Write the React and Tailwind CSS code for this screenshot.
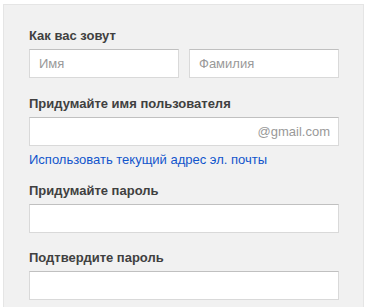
import React from 'react';

const Label = ({ children, className = '' }) => (
    <div className={`text-[13px] leading-4 font-bold text-[#404040] mb-[5px] ${className}`}>{children}</div>
);

const Field = ({ placeholder, suffix, className = '' }) => (
    <div className={`relative h-[29px] bg-white border border-[#d9d9d9] border-t-[#c0c0c0] ${className}`}>
        <input
            className="w-full h-full px-[9px] text-[13px] text-[#333] placeholder:text-[#999] outline-none bg-transparent"
            placeholder={placeholder}
        />
        {suffix && (
            <span className="absolute right-[8px] top-0 h-full flex items-center text-[13px] text-[#999]">{suffix}</span>
        )}
    </div>
);

export default function App() {
    return (
        <div className="w-[370px] h-[307px] bg-white pl-[3px] pt-[4px] overflow-hidden" style={{ fontFamily: '"Liberation Sans", Arial, sans-serif' }}>
            <div className="w-[361px] h-[310px] bg-[#f1f1f1] border border-[#e5e5e5] pl-[25px] pt-[23px]">
                <div className="w-[310px]">
                    <Label>Как вас зовут</Label>
                    <div className="flex gap-[10px]">
                        <Field placeholder="Имя" className="w-[150px]" />
                        <Field placeholder="Фамилия" className="w-[150px]" />
                    </div>

                    <Label className="mt-[18px]">Придумайте имя пользователя</Label>
                    <Field suffix="@gmail.com" />
                    <a href="#" className="block mt-[6px] text-[13px] leading-4 text-[#15c]">
                        Использовать текущий адрес эл. почты
                    </a>

                    <Label className="mt-[15px]">Придумайте пароль</Label>
                    <Field />

                    <Label className="mt-[17px]">Подтвердите пароль</Label>
                    <Field />
                </div>
            </div>
        </div>
    );
}
